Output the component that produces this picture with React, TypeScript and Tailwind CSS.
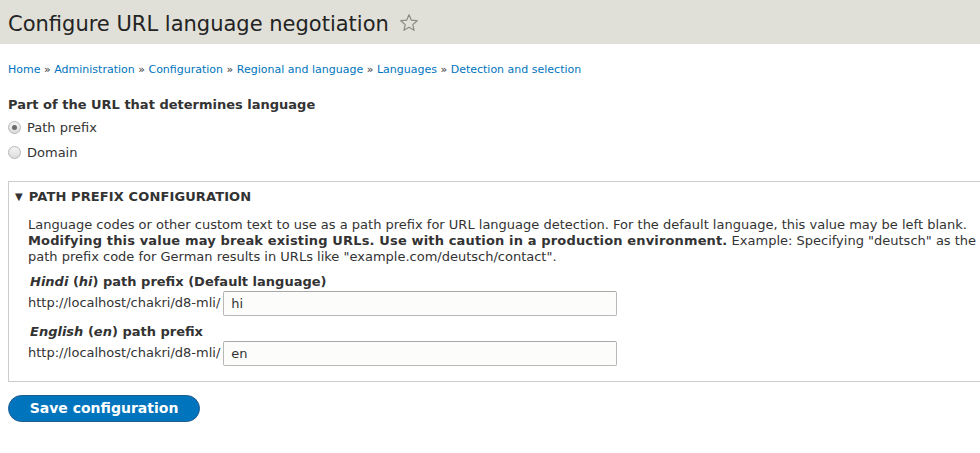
import React from 'react';

const crumbs = ['Home', 'Administration', 'Configuration', 'Regional and language', 'Languages', 'Detection and selection'];

function Radio({ checked, label }: { checked?: boolean; label: string }) {
  return (
    <label className="flex items-center h-[25px]">
      <span className="w-[13px] h-[13px] rounded-full border border-[#b5b5b5] bg-gradient-to-b from-[#f4f4f4] to-[#dcdcdc] flex items-center justify-center">
        {checked && <span className="w-[5px] h-[5px] rounded-full bg-[#6b6b6b]" />}
      </span>
      <span className="ml-[6px]">{label}</span>
    </label>
  );
}

function PrefixField({ lang, code, suffix, value, top }: { lang: string; code: string; suffix: string; value: string; top: string }) {
  return (
    <div className={top}>
      <div className="font-bold pl-[2px] h-[16px] leading-[16px]">
        <em>{lang}</em> (<em>{code}</em>) {suffix}
      </div>
      <div className="flex items-center h-[26px]">
        <span className="mr-[3px]">http://localhost/chakri/d8-mli/</span>
        <input
          readOnly
          value={value}
          className="w-[394px] h-[25px] px-[7px] border border-[#b8b8b8] border-t-[#a8a8a8] rounded-[2px] bg-[#fcfcfa] text-[13px] text-[#333] outline-none"
        />
      </div>
    </div>
  );
}

export default function App() {
  return (
    <div className="min-h-[453px] bg-white text-[13px] text-[#333] overflow-hidden" style={{ fontFamily: '"DejaVu Sans", sans-serif' }}>
      <div className="h-[44px] bg-[#e0e0d8] flex items-center px-[8px] pt-[4px]">
        <h1 className="text-[21px] text-[#232323] leading-none flex items-center">
          Configure URL language negotiation
          <svg className="ml-[10px] -mt-[2px]" width="20" height="20" viewBox="0 0 20 20">
            <path d="M10 1.8l2.4 5.4 5.8.5-4.4 3.9 1.3 5.7L10 14.3l-5.1 3 1.3-5.7L1.8 7.7l5.8-.5z" fill="none" stroke="#8c8b82" strokeWidth="1.2" strokeLinejoin="round" />
          </svg>
        </h1>
      </div>

      <div className="px-[8px] pt-[19px] text-[11px] leading-[14px] text-[#0074bd]">
        {crumbs.map((c, i) => (
          <span key={c}>
            {i > 0 && <span className="text-[#333]"> » </span>}
            <a>{c}</a>
          </span>
        ))}
      </div>

      <div className="pl-[8px] pt-[19px]">
        <div className="font-bold h-[18px] leading-[18px]">Part of the URL that determines language</div>
        <div className="mt-[1px]">
          <Radio checked label="Path prefix" />
          <Radio label="Domain" />
        </div>

        <div className="mt-[16px] w-[1000px] border border-r-0 border-[#ccc] pb-[15px]">
          <div className="flex items-center h-[29px] pl-[6px] font-bold uppercase tracking-[0.12px]">
            <span className="text-[10px] mr-[6px]">▼</span>
            Path prefix configuration
          </div>
          <div className="pl-[19px] pt-[6px]">
            <div className="leading-[16px] w-[958px]">
              Language codes or other custom text to use as a path prefix for URL language detection. For the default language, this value may be left blank.{' '}
              <strong className="tracking-[0.15px]">Modifying this value may break existing URLs. Use with caution in a production environment.</strong> Example: Specifying "deutsch" as the path prefix code for German results in URLs like "example.com/deutsch/contact".
            </div>
            <PrefixField top="mt-[9px]" lang="Hindi" code="hi" suffix="path prefix (Default language)" value="hi" />
            <PrefixField top="mt-[8px]" lang="English" code="en" suffix="path prefix" value="en" />
          </div>
        </div>

        <button className="mt-[13px] w-[192px] h-[27px] rounded-full bg-[#0074bd] border border-[#1e5c90] text-white font-bold text-[14px]">
          Save configuration
        </button>
      </div>
    </div>
  );
}
